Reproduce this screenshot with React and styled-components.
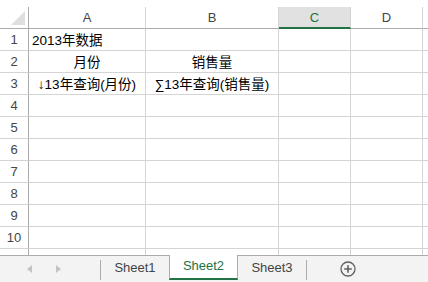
import React from 'react'
import styled, { createGlobalStyle } from 'styled-components'

const GlobalStyle = createGlobalStyle`
  html, body {
    margin: 0;
    padding: 0;
    background: #ffffff;
    overflow: hidden;
  }
  * { box-sizing: border-box; }
`;

const columns = ['A', 'B', 'C', 'D', ''];
const selectedCol = 'C';

const rows = [
  ['2013年数据', '', '', '', ''],
  ['月份', '销售量', '', '', ''],
  ['↓13年查询(月份)', '∑13年查询(销售量)', '', '', ''],
  [], [], [], [], [], [], [], [],
];

const alignments = [
  ['left', 'center'],
  ['center', 'center'],
  ['center', 'center'],
];

function App() {
  return (
    <Window>
      <GlobalStyle />
      <SheetArea>
        <Grid>
          <Corner>
            <CornerTriangle />
          </Corner>
          {columns.map((c, i) => (
            <ColHeader key={i} selected={c === selectedCol}>{c}</ColHeader>
          ))}
          {rows.map((row, r) => (
            <React.Fragment key={r}>
              <RowHeader>{r + 1}</RowHeader>
              {columns.map((c, i) => (
                <Cell key={i} align={(alignments[r] && alignments[r][i]) || 'left'}>
                  {row[i] || ''}
                </Cell>
              ))}
            </React.Fragment>
          ))}
        </Grid>
      </SheetArea>
      <TabBar>
        <NavArea>
          <NavArrow dir="left" />
          <NavArrow dir="right" />
        </NavArea>
        <Divider />
        <Tab>Sheet1</Tab>
        <Tab active>Sheet2</Tab>
        <Tab>Sheet3</Tab>
        <Divider />
        <AddButton>
          <svg width="16" height="16" viewBox="0 0 16 16">
            <circle cx="8" cy="8" r="7" fill="none" stroke="#606060" strokeWidth="1.3" />
            <path d="M8 4.2v7.6M4.2 8h7.6" stroke="#606060" strokeWidth="1.6" />
          </svg>
        </AddButton>
      </TabBar>
    </Window>
  );
}

export default App

const Window = styled.div`
  width: 428px;
  height: 282px;
  display: flex;
  flex-direction: column;
  font-family: "Liberation Sans", "Noto Sans CJK SC", sans-serif;
  background: #fff;
`;

const SheetArea = styled.div`
  height: 255px;
  overflow: hidden;
  padding-top: 7px;
`;

const Grid = styled.div`
  display: grid;
  grid-template-columns: 29px 117px 133px 72px 72px 1fr;
  grid-auto-rows: 22px;
`;

const Corner = styled.div`
  position: relative;
  border-right: 1px solid #ababab;
  border-bottom: 1px solid #ababab;
`;

const CornerTriangle = styled.div`
  position: absolute;
  right: 3px;
  bottom: 3px;
  width: 0;
  height: 0;
  border-left: 14px solid transparent;
  border-bottom: 14px solid #dfdfdf;
`;

const ColHeader = styled.div`
  display: flex;
  align-items: center;
  justify-content: center;
  font-size: 13px;
  color: ${p => (p.selected ? '#217346' : '#444')};
  background: ${p => (p.selected ? '#e1e1e1' : '#fff')};
  border-right: 1px solid #d4d4d4;
  border-bottom: ${p => (p.selected ? '2px solid #217346' : '1px solid #ababab')};
`;

const RowHeader = styled.div`
  display: flex;
  align-items: center;
  justify-content: center;
  font-size: 13px;
  color: #444;
  border-right: 1px solid #ababab;
  border-bottom: 1px solid #d4d4d4;
`;

const Cell = styled.div`
  display: flex;
  align-items: center;
  justify-content: ${p => (p.align === 'center' ? 'center' : 'flex-start')};
  padding: 0 3px 1px;
  font-size: 13.5px;
  color: #000;
  white-space: nowrap;
  border-right: 1px solid #d4d4d4;
  border-bottom: 1px solid #d4d4d4;
`;

const TabBar = styled.div`
  flex: 1;
  display: flex;
  align-items: stretch;
  background: #f3f3f3;
  border-top: 1px solid #ababab;
`;

const NavArea = styled.div`
  width: 100px;
  display: flex;
  align-items: center;
  gap: 24px;
  padding-left: 27px;
`;

const NavArrow = styled.span`
  width: 0;
  height: 0;
  border-top: 4px solid transparent;
  border-bottom: 4px solid transparent;
  ${p => (p.dir === 'left'
    ? 'border-right: 5px solid #c3c3c3;'
    : 'border-left: 5px solid #c3c3c3;')}
`;

const Divider = styled.div`
  width: 1px;
  margin: 4px 0 2px;
  background: #ababab;
`;

const Tab = styled.div`
  width: ${p => (p.active ? '69px' : '68px')};
  display: flex;
  align-items: center;
  justify-content: center;
  font-size: 13px;
  padding-bottom: 2px;
  color: ${p => (p.active ? '#217346' : '#444')};
  background: ${p => (p.active ? '#fff' : 'transparent')};
  margin-top: ${p => (p.active ? '-1px' : '0')};
  margin-bottom: 2px;
  border-left: ${p => (p.active ? '1px solid #ababab' : 'none')};
  border-right: ${p => (p.active ? '1px solid #ababab' : 'none')};
  border-bottom: ${p => (p.active ? '2px solid #217346' : 'none')};
`;

const AddButton = styled.div`
  width: 82px;
  display: flex;
  align-items: center;
  justify-content: center;
  padding-bottom: 1px;
`;
